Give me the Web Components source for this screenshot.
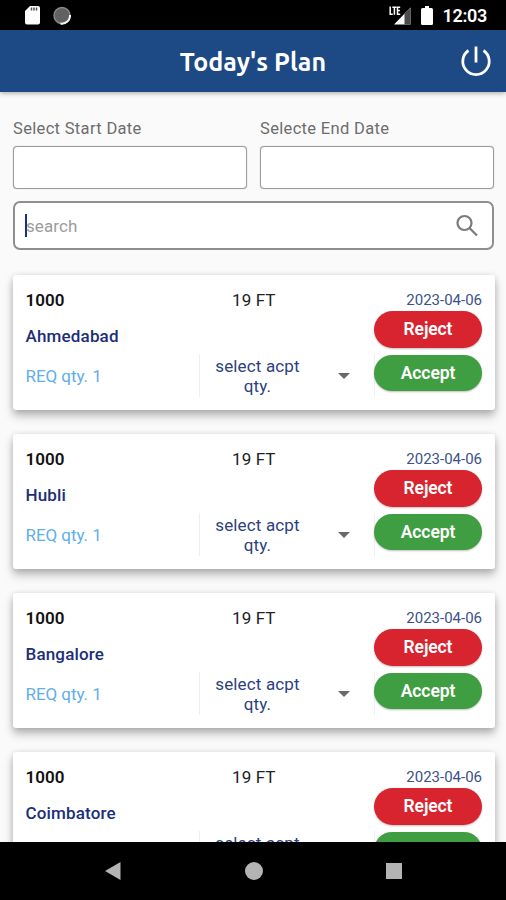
<!DOCTYPE html>
<html lang="en">
<head>
<meta charset="utf-8">
<title>Today's Plan</title>
<style>
html,body{margin:0;height:100%}
body{font-family:Roboto,"Liberation Sans",sans-serif;background:#fafafa;overflow:hidden}
</style>
</head>
<body>
<plan-app></plan-app>
<script>
class Base extends HTMLElement {
  constructor() { super(); this.attachShadow({mode: "open"}); }
  connectedCallback() { this.shadowRoot.innerHTML = this.render(); }
}

customElements.define("status-bar", class extends Base {
  render() { return `<style>
    :host{display:flex;align-items:center;height:30px;background:#000;color:#fff;box-sizing:border-box;padding:0 19px 0 25px;flex:none}
    .sp{flex:1} svg{display:block}
    .sd{margin-right:13px}
    .lte{margin-right:10px}.bat{margin-right:9px}
    span{font:600 18px/30px Roboto,sans-serif;letter-spacing:-.3px;padding-top:2px}
    </style>
    <svg class="sd" width="15" height="20" viewBox="0 0 15 20"><path d="M5 1h8q2 0 2 2v14.5q0 2-2 2H2q-2 0-2-2V6z" fill="#fff"/><path d="M6.500 2.500v3M9 2.500v3M11.500 2.500v3" stroke="#555" stroke-width="1.5"/></svg>
    <svg width="18" height="19" viewBox="0 0 18 19"><circle cx="9" cy="9.5" r="8" fill="#616161" stroke="#8a8a8a" stroke-width="1.4"/><path d="M17 9A8 8 0 0 1 7.500 17.500" fill="none" stroke="#f5f5f5" stroke-width="2"/></svg>
    <div class="sp"></div>
    <svg class="lte" width="22" height="20" viewBox="0 0 22 20"><path d="M5 19.500 21.500 2.500v17z" fill="#fff"/><path d="M15.500 8.700 21.500 2.500v17h-6z" fill="#4b4b4b"/><path d="M0 0h11.500v10.500H0z" fill="#000"/><path d="M1.200 1.500v7.700h2.600M3.300 2.200h4.200M5.400 2v7.800M11.200 2.200H8.500v7h2.700M8.500 5.600h2.400" fill="none" stroke="#fff" stroke-width="1.500"/></svg>
    <svg class="bat" width="12" height="19" viewBox="0 0 12 19"><path d="M4 0h4v2h2.500q1.500 0 1.500 1.500v14q0 1.500-1.500 1.500h-9Q0 19 0 17.500v-14Q0 2 1.500 2H4z" fill="#fff"/></svg>
    <span>12:03</span>`; }
});

customElements.define("app-header", class extends Base {
  render() { return `<style>
    :host{display:grid;grid-template-columns:60px 1fr 60px;align-items:center;height:61.500px;background:#1d4985;color:#fff;flex:none;box-shadow:0 1px 5px rgba(0,0,0,.35);z-index:1}
    h1{grid-column:2;margin:0;padding-top:2px;text-align:center;font:700 25px/32px Ubuntu,"Noto Sans",sans-serif;letter-spacing:.05px}
    svg{display:block;justify-self:center}
    </style>
    <h1><slot></slot></h1>
    <svg width="32" height="32" viewBox="0 0 32 32" fill="none" stroke="#fff" stroke-width="2.800"><path d="M16 1.500v16"/><path d="M8.500 5.500a13.200 13.200 0 1 0 15 0"/></svg>`; }
});

customElements.define("date-field", class extends Base {
  render() { return `<style>
    :host{display:block;flex:1}
    label{display:block;font-size:16.500px;line-height:20px;letter-spacing:.33px;color:#6d6d6d;margin-bottom:7px}
    div{height:43px;box-sizing:border-box;background:#fff;border:1px solid #9c9c9c;border-radius:4px;box-shadow:0 0 1px #999}
    </style><label><slot></slot></label><div></div>`; }
});

customElements.define("search-field", class extends Base {
  render() { return `<style>
    :host{display:flex;align-items:center;height:49px;box-sizing:border-box;background:#fff;border:2px solid #8f8f8f;border-radius:7px;padding:0 13px 0 10px}
    i{width:2px;height:23px;background:#17307f}
    span{flex:1;margin-left:-1px;padding-top:1px;font-size:17px;letter-spacing:.1px;color:#9c9c9c}
    svg{display:block}
    </style><i></i><span><slot></slot></span>
    <svg width="24" height="24" viewBox="0 0 24 24" fill="none" stroke="#7b7b7b" stroke-width="2.200"><circle cx="9.500" cy="9" r="7"/><path d="m14.500 14 7.500 7.500"/></svg>`; }
});

customElements.define("pill-button", class extends Base {
  render() { return `<style>
    :host{display:block;height:36.500px;border-radius:19px;background:var(--pill);color:#fff;text-align:center;font-weight:600;font-size:17.500px;line-height:37px;letter-spacing:-.1px;box-shadow:0 1px 2px rgba(0,0,0,.25)}
    </style><slot></slot>`; }
});

customElements.define("qty-select", class extends Base {
  render() { return `<style>
    :host{display:flex;align-items:center;height:43px;box-sizing:border-box;border:solid #efefef;border-width:0 1.500px;color:#2c417f}
    span{width:115px;text-align:center;font-size:17px;line-height:20px;letter-spacing:.15px}
    svg{display:block;margin-left:23px}
    </style><span><slot></slot></span>
    <svg width="12" height="6" viewBox="0 0 12 6"><path d="M0 0h12L6 6z" fill="#686868"/></svg>`; }
});

customElements.define("plan-card", class extends Base {
  render() { return `<style>
    :host{display:grid;grid-template-columns:173px 176px 107px;height:135px;box-sizing:border-box;background:#fff;border-radius:3px;padding:0 13px;box-shadow:0 6px 10px rgba(0,0,0,.25),0 1px 6px rgba(0,0,0,.14);flex:none}
    .l,.m,.r{display:flex;flex-direction:column}
    .l,.m{font-size:17px;line-height:20px;padding-top:15px}
    .l{margin-left:-.5px}
    .l b{font-weight:600;letter-spacing:0;color:#111}
    .city{font-weight:500;color:#1b2f79;margin-top:16px;letter-spacing:.17px}
    .req{color:#62aee9;margin-top:20px;letter-spacing:-.05px}
    .ft{color:#222;padding-left:33px;letter-spacing:.1px}
    qty-select{margin-top:44.500px}
    .r{padding-top:15px}
    .date{font-size:15px;line-height:20px;color:#3b5288;text-align:right;letter-spacing:0;margin-bottom:1.500px;white-space:nowrap}
    .no{--pill:#d8242f;margin-bottom:7px}.yes{--pill:#409e42}
    pill-button{margin-left:-1px}
    </style>
    <div class="l"><b>1000</b><span class="city"><slot></slot></span><span class="req">REQ qty. 1</span></div>
    <div class="m"><span class="ft">19 FT</span><qty-select>select acpt qty.</qty-select></div>
    <div class="r"><span class="date">2023-04-06</span><pill-button class="no">Reject</pill-button><pill-button class="yes">Accept</pill-button></div>`; }
});

customElements.define("nav-bar", class extends Base {
  render() { return `<style>
    :host{display:flex;justify-content:center;align-items:center;gap:123px;height:58px;background:#000;flex:none;z-index:1;box-sizing:border-box;padding-left:1px}
    svg{display:block}
    </style>
    <svg width="17" height="18" viewBox="0 0 17 18"><path d="M0 9 15.500 0v18z" fill="#b4b4b4"/></svg>
    <svg width="18" height="18" viewBox="0 0 18 18"><circle cx="9" cy="9" r="9" fill="#b4b4b4"/></svg>
    <svg width="16" height="16" viewBox="0 0 16 16"><path d="M0 0h16v16H0z" fill="#b4b4b4"/></svg>`; }
});

customElements.define("plan-app", class extends Base {
  render() { return `<style>
    :host{display:flex;flex-direction:column;width:506px;height:900px;background:#fafafa;overflow:hidden}
    main{flex:1;min-height:0;overflow:hidden;padding:27.500px 12px 0 13px}
    .dates{display:flex;gap:12px;margin-bottom:12px}
    date-field:first-child{margin-right:1px}
    .cards{display:flex;flex-direction:column;gap:24px;margin:24.500px -1px 0 0}
    </style>
    <status-bar></status-bar>
    <app-header>Today's Plan</app-header>
    <main>
      <div class="dates"><date-field>Select Start Date</date-field><date-field>Selecte End Date</date-field></div>
      <search-field>search</search-field>
      <div class="cards"><plan-card>Ahmedabad</plan-card><plan-card>Hubli</plan-card><plan-card>Bangalore</plan-card><plan-card>Coimbatore</plan-card></div>
    </main>
    <nav-bar></nav-bar>`; }
});
</script>
</body>
</html>
